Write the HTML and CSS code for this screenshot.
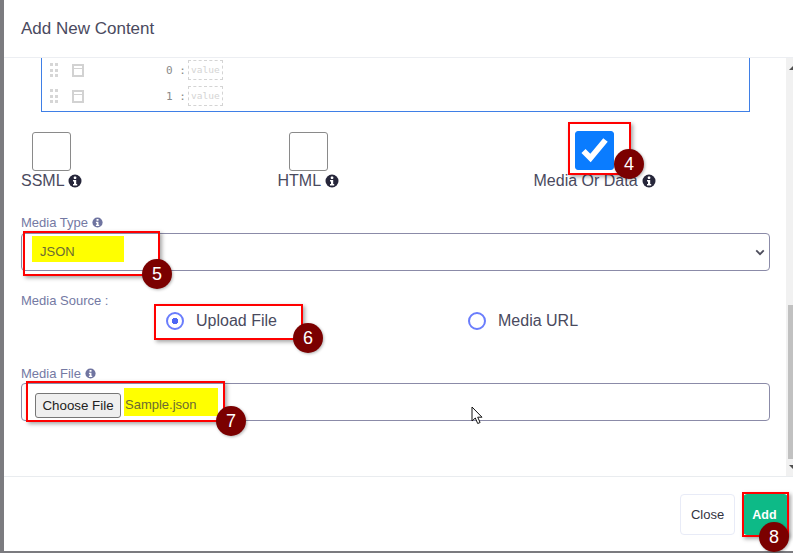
FILE: index.html
```html
<!DOCTYPE html>
<html lang="en">
<head>
<meta charset="utf-8">
<title>Add New Content</title>
<link rel="stylesheet" href="styles.css">
</head>
<body>
<div class="modal">
  <header class="modal-header"><h5>Add New Content</h5></header>
  <div class="modal-body">
    <div class="content">
      <div class="json-editor">
        <div class="json-row">
          <span class="grip"><i></i><i></i><i></i><i></i><i></i><i></i></span>
          <span class="node-icon"></span>
          <span class="json-key">0 :</span>
          <span class="json-value">value</span>
        </div>
        <div class="json-row">
          <span class="grip"><i></i><i></i><i></i><i></i><i></i><i></i></span>
          <span class="node-icon"></span>
          <span class="json-key">1 :</span>
          <span class="json-value">value</span>
        </div>
      </div>
      <div class="types">
        <div class="type type-ssml">
          <span class="box"></span>
          <span class="type-label">SSML <svg class="info" viewBox="0 0 14 14"><circle cx="7" cy="7" r="6.5"/><rect x="5.8" y="2.6" width="2.5" height="2.3" rx=".6" fill="#fff"/><path d="M5 6h3.2v4H9.2v1.5H5V10h1V7.5H5z" fill="#fff"/></svg></span>
        </div>
        <div class="type type-html">
          <span class="box"></span>
          <span class="type-label">HTML <svg class="info" viewBox="0 0 14 14"><circle cx="7" cy="7" r="6.5"/><rect x="5.8" y="2.6" width="2.5" height="2.3" rx=".6" fill="#fff"/><path d="M5 6h3.2v4H9.2v1.5H5V10h1V7.5H5z" fill="#fff"/></svg></span>
        </div>
        <div class="type type-media">
          <span class="box box-checked"><svg viewBox="0 0 39 39" width="39" height="39"><path d="M8.500 20l7 7L30.500 9" fill="none" stroke="#fff" stroke-width="5.800"/></svg></span>
          <span class="type-label">Media Or Data <svg class="info" viewBox="0 0 14 14"><circle cx="7" cy="7" r="6.5"/><rect x="5.8" y="2.6" width="2.5" height="2.3" rx=".6" fill="#fff"/><path d="M5 6h3.2v4H9.2v1.5H5V10h1V7.5H5z" fill="#fff"/></svg></span>
        </div>
      </div>
      <div class="field">
        <label class="field-label">Media Type <svg class="info info-small" viewBox="0 0 14 14"><circle cx="7" cy="7" r="6.5"/><rect x="5.8" y="2.6" width="2.5" height="2.3" rx=".6" fill="#fff"/><path d="M5 6h3.2v4H9.2v1.5H5V10h1V7.5H5z" fill="#fff"/></svg></label>
        <div class="control select-control">
          <span class="mark mark-json">JSON</span>
          <svg class="chevron" viewBox="0 0 12 8" width="10" height="7"><path d="M1.500 1.500L6 6l4.500-4.500" fill="none" stroke="#4d4d5c" stroke-width="2.200"/></svg>
        </div>
      </div>
      <div class="source">
        <div class="field-label">Media Source :</div>
        <div class="radios">
          <span class="radio-item radio-upload"><span class="radio radio-on"></span>Upload File</span>
          <span class="radio-item radio-url"><span class="radio"></span>Media URL</span>
        </div>
      </div>
      <div class="field field-file">
        <label class="field-label">Media File <svg class="info info-small" viewBox="0 0 14 14"><circle cx="7" cy="7" r="6.5"/><rect x="5.8" y="2.6" width="2.5" height="2.3" rx=".6" fill="#fff"/><path d="M5 6h3.2v4H9.2v1.5H5V10h1V7.5H5z" fill="#fff"/></svg></label>
        <div class="control file-control">
          <span class="choose">Choose File</span>
          <span class="mark mark-file">Sample.json</span>
        </div>
      </div>
    </div>
    <div class="scrollbar"><div class="arrow arrow-up"></div><div class="thumb"></div><div class="arrow arrow-down"></div></div>
  </div>
  <footer class="modal-footer">
    <button class="btn btn-close" type="button">Close</button>
    <button class="btn btn-add" type="button">Add</button>
  </footer>
</div>

<div class="callout callout-4"></div><span class="step step-4">4</span>
<div class="callout callout-5"></div><span class="step step-5">5</span>
<div class="callout callout-6"></div><span class="step step-6">6</span>
<div class="callout callout-7"></div><span class="step step-7">7</span>
<div class="callout callout-8"></div><span class="step step-8">8</span>

<svg class="cursor" viewBox="0 0 13 19" width="13" height="19"><path d="M1 1v14l3.300-3 2.400 5.500 2.400-1-2.400-5.300H11z" fill="#fff" stroke="#111" stroke-width="1"/></svg>
</body>
</html>
```

FILE: styles.css
```css
* { box-sizing: border-box; }
html, body { margin: 0; height: 553px; overflow: hidden; }
body {
  position: relative;
  background: #7b7b7f;
  font-family: "Liberation Sans", Arial, sans-serif;
  color: #4a4a5e;
}
.modal {
  margin-left: 4px;
  height: 551px;
  display: flex;
  flex-direction: column;
  background: #fff;
}
.modal-header {
  height: 58px;
  flex: none;
  padding: 19px 17px 0;
  border-bottom: 1px solid #eceef2;
}
.modal-header h5 {
  margin: 0;
  font-size: 17px;
  line-height: 20px;
  font-weight: 400;
  color: #4a4a60;
}
.modal-body {
  height: 418px;
  flex: none;
  display: flex;
  overflow: hidden;
}
.content { flex: 1; padding-left: 17px; padding-right: 16px; min-width: 0; }
.scrollbar { width: 7px; flex: none; background: #f1f1f1; padding-left: 2px; display: flex; flex-direction: column; overflow: hidden; }
.arrow { flex: none; width: 0; height: 0; margin-left: 1px; border-style: solid; border-color: transparent; border-width: 0 4px; }
.arrow-up { border-bottom: 4px solid #505050; margin-top: 8px; }
.arrow-down { border-top: 4px solid #505050; margin-top: 6px; margin-bottom: 7px; }
.thumb { height: 154px; width: 5px; margin-top: auto; background: #c1c1c1; }

.json-editor {
  margin: -1px 20px 0;
  height: 55px;
  border: 1px solid #3f7fe6;
  border-top: 0;
}
.json-row { height: 26px; display: flex; align-items: center; }
.grip { width: 8px; display: grid; grid-template-columns: 3px 3px; column-gap: 2px; row-gap: 2.500px; margin-left: 8px; }
.grip i { height: 3px; background: #d6d6d6; }
.node-icon { width: 12px; height: 13px; border: 2px solid #d2d2d2; margin-left: 14px; background: linear-gradient(#d2d2d2, #d2d2d2) 0 2px / 100% 1px no-repeat; }
.json-key {
  width: 29px; margin-left: 82px;
  font-family: "DejaVu Sans Mono", "Liberation Mono", monospace;
  font-size: 11px; color: #8a8a8a; white-space: nowrap;
}
.json-value {
  font-family: "DejaVu Sans Mono", "Liberation Mono", monospace;
  font-size: 9.500px; color: #d4d4d4;
  border: 1px dashed #d4d4d4; height: 20px; line-height: 18px;
  padding: 0 2px; margin-left: -7px;
}

.types { display: flex; margin-top: 20px; height: 76px; }
.type { display: flex; flex-direction: column; align-items: flex-start; }
.type-ssml { width: 256.500px; }
.type-html { width: 256px; }
.box {
  display: block; width: 39px; height: 39px; margin-left: 11px;
  border: 1px solid #8a8a8a; border-radius: 3px; background: #fff;
}
.box-checked { background: #0a7cff; border-color: #0a7cff; overflow: hidden; }
.box-checked svg { display: block; margin: -1px; }
.type-media .box { margin-left: 41px; margin-top: -1px; margin-bottom: 1px; }
.type-label { font-size: 16px; line-height: 20px; color: #4a4a5e; white-space: nowrap; }
.info { width: 14px; height: 14px; fill: #26263a; vertical-align: -2px; }
.info-small { width: 11px; height: 11px; fill: #6f74a0; vertical-align: -1px; }

.field-label { font-size: 13px; line-height: 18px; margin-bottom: -2px; color: #7479a3; display: block; }
.field { margin-top: 6px; }
.control {
  border: 1px solid #8b8ba8;
  border-radius: 4px;
  height: 38px;
  margin-top: 3px;
  display: flex;
  align-items: center;
}
.select-control { justify-content: space-between; padding: 0 4px 0 10px; }
.mark { background: #ffff00; color: #6b6b33; font-size: 13px; }
.mark-json { width: 92px; height: 26px; line-height: 32px; padding-left: 8px; align-self: flex-start; margin-top: 2px; }
.chevron { flex: none; }

.source { margin-top: 21px; height: 58px; }
.radios { display: flex; margin-top: 3px; }
.radio-item { display: flex; align-items: center; font-size: 16px; color: #4a4a5e; line-height: 20px; white-space: nowrap; }
.radio-upload { margin-left: 145px; width: 302px; }
.radio { width: 18px; height: 18px; border: 2px solid #6a7dfc; border-radius: 50%; margin-right: 12px; background: #fff; }
.radio-on { background: radial-gradient(circle, #4d66f5 0 3px, #fff 3.500px); }
.field-file { margin-top: 15px; }
.file-control { padding-left: 13px; margin-top: 2px; }
.choose {
  width: 86px; height: 25px; border: 1px solid #767676; border-radius: 3px;
  background: #efefef; color: #222; font-size: 13.330px; line-height: 23px; text-align: center;
  align-self: flex-start; margin-top: 9px;
}
.mark-file { width: 94px; height: 28px; line-height: 34px; margin-left: 3px; padding-left: 1px; }

.modal-footer {
  flex: 1;
  border-top: 1px solid #e9ecef;
  display: flex;
  justify-content: flex-end;
  align-items: flex-start;
  padding: 17px 5px 0 0;
  gap: 8px;
}
.btn { height: 41px; border-radius: 4px; font-size: 13px; font-family: "Liberation Sans", Arial, sans-serif; padding: 0; }
.btn-close { width: 55px; background: #fff; border: 1px solid #e8ebf7; color: #33333f; }
.btn-add { width: 45px; background: #0dba87; border: 1px solid #0dba87; color: #fff; font-size: 12.500px; font-weight: 700; padding-right: 2px; }

.callout {
  position: absolute;
  border: 2px solid #f00;
  box-shadow: 2px 2px 4px rgba(0,0,0,.35);
}
.callout-4 { left: 568px; top: 122px; width: 63px; height: 53px; }
.callout-5 { left: 23px; top: 231px; width: 137px; height: 45px; }
.callout-6 { left: 154px; top: 304px; width: 149px; height: 36px; }
.callout-7 { left: 26px; top: 381px; width: 199px; height: 41px; }
.callout-8 { left: 742px; top: 492px; width: 47px; height: 45px; }
.step {
  position: absolute;
  width: 30px; height: 30px; border-radius: 50%;
  background: #7b0000; color: #fff;
  font-size: 18px; line-height: 30px; text-align: center;
  box-shadow: 1px 1px 3px rgba(0,0,0,.3);
}
.step-4 { left: 614px; top: 149px; }
.step-5 { left: 142px; top: 259px; }
.step-6 { left: 293px; top: 323px; }
.step-7 { left: 216px; top: 406px; }
.step-8 { left: 759px; top: 522px; }
.cursor { position: absolute; left: 471px; top: 406px; }
```
